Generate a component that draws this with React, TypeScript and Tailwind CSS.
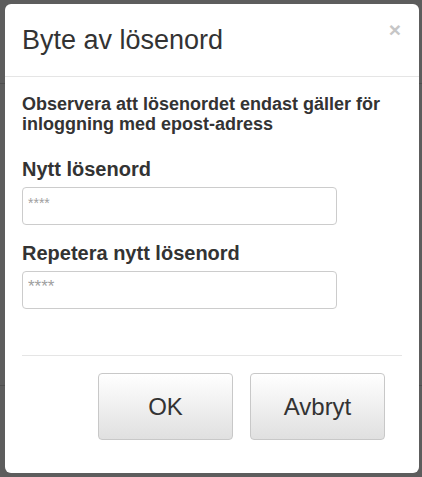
import React from "react";

const font = { fontFamily: '"Liberation Sans", Arial, Helvetica, sans-serif' };

export default function App() {
  return (
    <div
      className="relative w-[422px] h-[477px] overflow-hidden bg-[#5d5d5d]"
      style={font}
    >
      {/* dimmed page behind the modal */}
      <div className="flex flex-col">
        <div className="h-[84px] border-b border-[#4f4f4f]" />
        <div className="h-[302px] border-b border-[#4f4f4f]" />
      </div>

      {/* modal */}
      <div className="absolute left-[5px] top-[4px] w-[414px] h-[469px] bg-white rounded-[6px] flex flex-col text-[#333]">
        <div className="h-[73px] border-b border-[#e5e5e5] flex items-start justify-between pl-[17px] pr-[17px]">
          <h4 className="mt-[21px] text-[27px] leading-[30px] font-normal">Byte av lösenord</h4>
          <button className="mt-[15px] mr-[1px] text-[21px] leading-[21px] font-bold text-[#c6c6c6] cursor-pointer">
            ×
          </button>
        </div>
        <div className="px-[17px] flex flex-col">
          <p className="mt-[17px] text-[18px] leading-[20px] font-bold">
            Observera att lösenordet endast gäller för inloggning med epost-adress
          </p>
          <label className="mt-[24px] text-[20px] leading-[22px] font-bold">Nytt lösenord</label>
          <input
            type="password"
            placeholder="****"
            className="mt-[7px] w-[315px] h-[38px] rounded-[4px] border border-[#cccccc] px-[5px] pb-[6px] text-[14px] placeholder:text-[#a0a0a0] outline-none"
          />
          <label className="mt-[17px] text-[20px] leading-[22px] font-bold">Repetera nytt lösenord</label>
          <input
            type="password"
            placeholder="****"
            className="mt-[7px] w-[315px] h-[38px] rounded-[4px] border border-[#cccccc] px-[5px] pb-[6px] text-[17px] placeholder:text-[#a0a0a0] outline-none"
          />
          <div className="mt-[46px] border-t border-[#e5e5e5] pt-[17px] pr-[17px] flex justify-end gap-[17px]">
            <button className="w-[135px] h-[67px] rounded-[4px] border border-[#c8c8c8] bg-linear-to-b from-white to-[#e0e0e0] text-[24px] text-[#333] cursor-pointer">
              OK
            </button>
            <button className="w-[135px] h-[67px] rounded-[4px] border border-[#c8c8c8] bg-linear-to-b from-white to-[#e0e0e0] text-[24px] text-[#333] cursor-pointer">
              Avbryt
            </button>
          </div>
        </div>
      </div>
    </div>
  );
}
